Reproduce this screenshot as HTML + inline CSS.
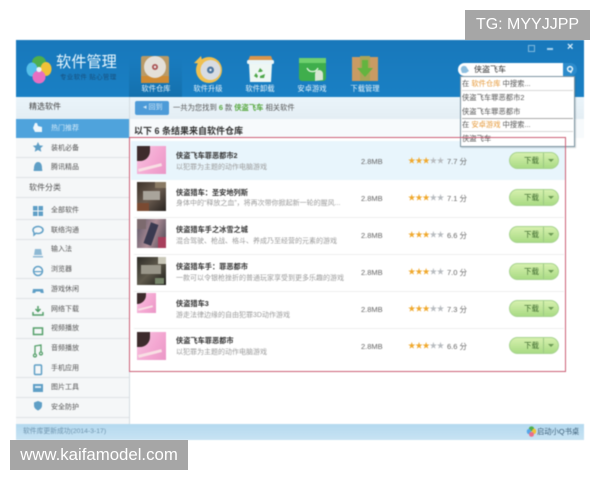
<!DOCTYPE html>
<html lang="zh"><head><meta charset="utf-8"><title>软件管理</title>
<style>
html,body{margin:0;padding:0;background:#fff;width:600px;height:480px;overflow:hidden}
body{position:relative;font-family:"Liberation Sans","Noto Sans CJK SC",sans-serif;color:#444}
div,span{position:absolute;white-space:nowrap}
span.i{position:static}
svg{position:absolute;overflow:visible}
#app{left:0;top:0;width:600px;height:480px;filter:blur(.4px)}
.tl{color:#e6f3fb;font-size:7.3px;line-height:10px;text-align:center;width:50px;top:84px}
.nav{left:16px;width:113px;height:20px;background:#f5f7f8;border-bottom:1px solid #dfe3e5;box-sizing:border-box}
.sl{left:51px;font-size:7px;line-height:10px;color:#555}
.rowline{left:134px;width:430px;height:1px;background:#eee}
.name{left:176px;font-size:7.2px;line-height:10px;font-weight:bold;color:#333}
.desc{left:176px;font-size:7px;line-height:10px;color:#9a9a9a}
.size{left:361px;font-size:7.5px;line-height:10px;color:#666}
.star{left:408px;font-size:7.5px;line-height:10px;letter-spacing:-.3px;color:#f0a92e}
.star b{font-weight:normal;color:#b8bcc0}
.sc{left:447px;font-size:7.5px;line-height:10px;color:#666}
.btn{left:509px;width:50px;height:17px;border-radius:9px;background:linear-gradient(#d6f0ae,#a9db84);border:1px solid #a8d490;box-sizing:border-box;color:#3e6b2e;font-size:7.5px;line-height:15px}
.btn i{position:absolute;left:33px;top:0;width:1px;height:15px;background:#9cc884}
.btn u{position:absolute;left:38px;top:6px;border:3px solid transparent;border-top:3px solid #6c9a55}
.th{left:137px;width:29px;height:29px;overflow:hidden}
.pink{background:linear-gradient(120deg,#f6c4e0,#f4a8d2 55%,#ea96c6)}
.hair{background:#3d2b2c;border-radius:0 0 10px 0;left:0;top:0}
.sash{background:#f8dfe4;transform:rotate(-14deg)}
.dark{background:linear-gradient(135deg,#3c3129,#6b5c50 50%,#27221f)}
.menu{left:462px;font-size:7.3px;line-height:10px;color:#555}
.or{position:static;color:#e69a3a}
.wm{background:#a6a6a6;color:#fff;font-family:"Liberation Sans",sans-serif}
</style></head><body>
<div id="app">
<div style="left:16px;top:40px;width:568px;height:400px;background:#fff"></div>
<!-- header -->
<div style="left:16px;top:40px;width:568px;height:57px;background:linear-gradient(#1878bb,#1a80c4)"></div>
<div style="left:129px;top:58px;width:53px;height:39px;background:linear-gradient(rgba(16,100,160,0),#1470ad)"></div>

<!-- logo -->
<svg style="left:26px;top:55px" width="26" height="29" viewBox="0 0 26 29">
<ellipse cx="13" cy="7.5" rx="7" ry="6.5" fill="#4fae4c"/>
<ellipse cx="20" cy="14" rx="5.5" ry="7" fill="#f0c238"/>
<ellipse cx="6" cy="14.5" rx="5.5" ry="7" fill="#56bfe8"/>
<ellipse cx="13" cy="22" rx="6.5" ry="6.5" fill="#e86fc2"/>
<circle cx="13" cy="14.5" r="2.6" fill="#e8f5fb"/>
</svg>
<div style="left:56px;top:54px;font-size:15.2px;line-height:18px;color:#e8f6fd">软件管理</div>
<div style="left:60px;top:74px;font-size:6.5px;line-height:8px;color:#174f7d;letter-spacing:.3px">专业软件 贴心管理</div>

<!-- toolbar icons -->
<svg style="left:140px;top:56px" width="30" height="28" viewBox="0 0 30 28">
<rect x="1" y="0" width="28" height="27" rx="2" fill="#b99a66"/>
<rect x="1" y="20" width="28" height="7" fill="#cf8b34"/>
<circle cx="15" cy="11" r="11" fill="#e4e0d8"/>
<circle cx="15" cy="11" r="3" fill="#a55"/><circle cx="15" cy="11" r="1.2" fill="#eee"/>
</svg>
<svg style="left:193px;top:56px" width="30" height="27" viewBox="0 0 30 27">
<circle cx="16" cy="14" r="13" fill="#efc050"/>
<circle cx="17.500" cy="14" r="10" fill="#d8dce2"/>
<circle cx="17.500" cy="14" r="3.500" fill="#4d77a0"/><circle cx="17.500" cy="14" r="1.200" fill="#e8eef3"/>
<path d="M1 7 L8 0 L10 8 Z" fill="#efc050"/>
</svg>
<svg style="left:246px;top:55px" width="29" height="28" viewBox="0 0 29 28">
<path d="M4 1h21l2 5H2z" fill="#d9954c"/>
<rect x="1" y="5" width="27" height="4" rx="1.5" fill="#e9f5f8"/>
<path d="M3 9h23l-1 18H4z" fill="#eef7f4"/>
<path d="M14 13l3 3-2 1h-3zM19 19l-1 4h-4v-2zM10 18l2 3-1 2-3-2z" fill="#4fa84a"/>
</svg>
<svg style="left:298px;top:56px" width="29" height="26" viewBox="0 0 29 26">
<rect x="1" y="2" width="27" height="23" rx="3" fill="#3fae4c"/>
<rect x="1" y="2" width="27" height="5" fill="#6fd06e"/>
<path d="M9 12a6 6 0 0 0 11 0" fill="none" stroke="#dff5dc" stroke-width="1.4"/>
<path d="M17 25v-7a4 4 0 0 1 8 0v6z" fill="#d9e6d4"/>
</svg>
<svg style="left:351px;top:56px" width="28" height="26" viewBox="0 0 28 26">
<path d="M1 1h26v24H1z" fill="#c99b63"/>
<path d="M9 0h10v25H9z" fill="#a9a458"/>
<path d="M11 4h6v8h5l-8 9-8-9h5z" fill="#63b43f"/>
</svg>
<div class="tl" style="left:131px">软件仓库</div>
<div class="tl" style="left:183px">软件升级</div>
<div class="tl" style="left:235px">软件卸载</div>
<div class="tl" style="left:287px">安卓游戏</div>
<div class="tl" style="left:340px">下载管理</div>

<!-- window controls -->
<div style="left:528px;top:45px;width:5px;height:5px;border:1px solid #7fb8dd"></div>
<div style="left:547px;top:48px;width:6px;height:1.5px;background:#a8d3ee"></div>
<div style="left:567px;top:41px;font-size:11px;line-height:12px;color:#d8eefa;font-weight:bold">×</div>

<!-- sub bar -->
<div style="left:16px;top:97px;width:568px;height:22px;background:linear-gradient(#eaf4fa,#e4eef4)"></div>
<div style="left:29px;top:102px;font-size:8px;line-height:10px;color:#444">精选软件</div>
<div style="left:135px;top:101px;width:34px;height:14px;border-radius:2px;background:#4d9bd8"></div>
<div style="left:143px;top:103px;font-size:7px;line-height:10px;color:#cfe6f6">◂ 回到</div>
<div style="left:173px;top:103px;font-size:7.3px;line-height:10px;color:#555">一共为您找到 <b class="i" style="color:#58a83f">6</b> 款 <b class="i" style="color:#58a83f">侠盗飞车</b> 相关软件</div>

<!-- sidebar -->
<div style="left:16px;top:119px;width:113px;height:305px;background:#f5f7f8"></div>
<div style="left:129px;top:97px;width:1px;height:327px;background:#d5dde2"></div>
<div style="left:16px;top:119px;width:113px;height:19px;background:#4fa3dc"></div>
<div class="nav" style="top:138px"></div><div class="nav" style="top:158px"></div><div class="nav" style="top:178px"></div>
<div class="nav" style="top:198px;height:22px"></div><div class="nav" style="top:220px"></div><div class="nav" style="top:240px"></div><div class="nav" style="top:259px"></div><div class="nav" style="top:279px"></div>
<div class="nav" style="top:299px"></div><div class="nav" style="top:319px"></div><div class="nav" style="top:339px"></div><div class="nav" style="top:358px"></div><div class="nav" style="top:378px"></div><div class="nav" style="top:398px"></div>

<div class="sl" style="top:124px;color:#d2e9f8">热门推荐</div>
<div class="sl" style="top:144px">装机必备</div>
<div class="sl" style="top:163px">腾讯精品</div>
<div style="left:29px;top:183px;font-size:8px;line-height:10px;color:#555">软件分类</div>
<div class="sl" style="top:206px">全部软件</div>
<div class="sl" style="top:226px">联络沟通</div>
<div class="sl" style="top:245px">输入法</div>
<div class="sl" style="top:265px">浏览器</div>
<div class="sl" style="top:285px">游戏休闲</div>
<div class="sl" style="top:305px">网络下载</div>
<div class="sl" style="top:324px">视频播放</div>
<div class="sl" style="top:344px">音频播放</div>
<div class="sl" style="top:364px">手机应用</div>
<div class="sl" style="top:383px">图片工具</div>
<div class="sl" style="top:403px">安全防护</div>

<!-- sidebar icons -->
<svg style="left:32px;top:122px" width="12" height="280" viewBox="0 0 12 280" fill="#5f9fc6">
<path d="M3 1l2 0 1 3 4 1 0 5H3L1 6z" fill="#eef7fc"/>
<path d="M6 20l1.6 3.4 3.6.4-2.7 2.4.8 3.6L6 28l-3.3 1.8.8-3.6L.8 23.8l3.6-.4z"/>
<path d="M6 40c3 0 4 3 4 6s1 2 0 3H2c-1-1 0-1 0-3s1-6 4-6z"/>
<path d="M1 84h4.500v4.500H1zM6.500 84H11v4.500H6.500zM1 89.500h4.500V94H1zM6.500 89.500H11V94H6.500z"/>
<path d="M1 108a5 3.500 0 1 1 3 3.200L2 113v-2.500A3.500 3.500 0 0 1 1 108z" fill="none" stroke="#5f9fc6" stroke-width="1.500"/>
<path d="M3 127h6l1 6H2zM1 134h10v1.500H1z" fill="#8eb9d4"/>
<circle cx="6" cy="149" r="4.500" fill="none" stroke="#5f9fc6" stroke-width="1.500"/><path d="M2 149h8v1.200H2z"/>
<path d="M1 167h10l.8 4H9l-1-1.500H4L3 171H.3z"/>
<path d="M6 184v5M3.500 187l2.500 2.500 2.500-2.500M1 190v3h10v-3" fill="none" stroke="#55a06a" stroke-width="1.500"/>
<rect x="1.500" y="206" width="9" height="6.500" fill="none" stroke="#55a06a" stroke-width="1.500"/>
<path d="M3 232v-8l6-1v7M3 232a1.500 1.500 0 1 1-.1 0M9 230a1.500 1.500 0 1 1-.1 0" fill="none" stroke="#55a06a" stroke-width="1.300"/>
<rect x="2.500" y="243" width="7" height="9.500" rx="1" fill="none" stroke="#5f9fc6" stroke-width="1.500"/>
<rect x="1" y="262" width="10" height="8" fill="#5f9fc6"/><rect x="3" y="264" width="6" height="2" fill="#dbeaf3"/>
<path d="M6 279l4 1.500v3c0 2.500-2 4-4 5-2-1-4-2.500-4-5v-3z"/>
</svg>

<!-- results header -->
<div style="left:130px;top:119px;width:454px;height:19px;background:#f7fafc"></div>
<div style="left:134px;top:126px;font-size:9px;line-height:11px;font-weight:bold;color:#333">以下 6 条结果来自软件仓库</div>

<!-- highlighted row -->
<div style="left:131px;top:141px;width:434px;height:39px;background:#e8f5fc"></div>
<div class="rowline" style="top:217px"></div><div class="rowline" style="top:254px"></div><div class="rowline" style="top:291px"></div><div class="rowline" style="top:328px"></div>

<!-- thumbs -->
<div class="th pink" style="top:146px;height:28px"><div class="hair" style="width:13px;height:15px"></div><div class="sash" style="left:1px;top:20px;width:24px;height:3px"></div></div>
<div class="th dark" style="top:182px"><div style="left:6px;top:9px;width:17px;height:9px;background:#a9a49b"></div><div style="left:0;top:21px;width:12px;height:8px;background:#7a4a32"></div><div style="left:18px;top:0;width:11px;height:6px;background:#8a7a64"></div></div>
<div class="th" style="top:219px;background:linear-gradient(110deg,#5a5566,#b08f98 50%,#4a4552)"><div style="left:10px;top:4px;width:8px;height:22px;background:#3a3a50;transform:rotate(20deg)"></div><div style="left:0;top:0;width:9px;height:10px;background:#7c6a6e"></div><div style="left:21px;top:18px;width:8px;height:11px;background:#a83f5c"></div></div>
<div class="th dark" style="top:257px;height:28px;background:linear-gradient(135deg,#2c2a25,#5f5a4c 50%,#1c1c18)"><div style="left:4px;top:8px;width:20px;height:9px;background:#9a978a"></div><div style="left:21px;top:0;width:8px;height:7px;background:#c9c7b8"></div><div style="left:18px;top:21px;width:9px;height:6px;background:#76856a"></div></div>
<div class="th pink" style="top:293px;width:19px;height:20px"><div class="hair" style="width:9px;height:11px"></div><div class="sash" style="left:1px;top:14px;width:15px;height:2px"></div></div>
<div class="th pink" style="top:332px;height:28px"><div class="hair" style="width:13px;height:15px"></div><div class="sash" style="left:1px;top:20px;width:24px;height:3px"></div></div>

<!-- rows -->
<div class="name" style="top:151px">侠盗飞车罪恶都市2</div>
<div class="desc" style="top:163px">以犯罪为主题的动作电脑游戏</div>
<div class="name" style="top:188px">侠盗猎车：圣安地列斯</div>
<div class="desc" style="top:199px">身体中的“释放之血”，将再次带你掀起新一轮的腥风...</div>
<div class="name" style="top:225px">侠盗猎车手之冰雪之城</div>
<div class="desc" style="top:237px">混合驾驶、枪战、格斗、养成乃至经营的元素的游戏</div>
<div class="name" style="top:262px">侠盗猎车手：罪恶都市</div>
<div class="desc" style="top:274px">一款可以令银枪挫折的普通玩家享受到更多乐趣的游戏</div>
<div class="name" style="top:299px">侠盗猎车3</div>
<div class="desc" style="top:311px">游走法律边缘的自由犯罪3D动作游戏</div>
<div class="name" style="top:336px">侠盗飞车罪恶都市</div>
<div class="desc" style="top:348px">以犯罪为主题的动作电脑游戏</div>

<div class="size" style="top:157px">2.8MB</div><div class="size" style="top:194px">2.8MB</div><div class="size" style="top:231px">2.8MB</div><div class="size" style="top:268px">2.8MB</div><div class="size" style="top:305px">2.8MB</div><div class="size" style="top:342px">2.8MB</div>

<div class="star" style="top:156px">★★★<b>★★</b></div><div class="sc" style="top:157px">7.7 分</div>
<div class="star" style="top:193px">★★★<b>★★</b></div><div class="sc" style="top:194px">7.1 分</div>
<div class="star" style="top:230px">★★★<b>★★</b></div><div class="sc" style="top:231px">6.6 分</div>
<div class="star" style="top:267px">★★★<b>★★</b></div><div class="sc" style="top:268px">7.0 分</div>
<div class="star" style="top:304px">★★★<b>★★</b></div><div class="sc" style="top:305px">7.3 分</div>
<div class="star" style="top:341px">★★★<b>★★</b></div><div class="sc" style="top:342px">6.6 分</div>

<div class="btn" style="top:152px"><span style="left:14px;top:0">下载</span><i></i><u></u></div>
<div class="btn" style="top:189px"><span style="left:14px;top:0">下载</span><i></i><u></u></div>
<div class="btn" style="top:226px"><span style="left:14px;top:0">下载</span><i></i><u></u></div>
<div class="btn" style="top:263px"><span style="left:14px;top:0">下载</span><i></i><u></u></div>
<div class="btn" style="top:300px"><span style="left:14px;top:0">下载</span><i></i><u></u></div>
<div class="btn" style="top:337px"><span style="left:14px;top:0">下载</span><i></i><u></u></div>

<!-- search -->
<div style="left:458px;top:63px;width:106px;height:13px;background:#fff;border-radius:7px 0 0 7px"></div>
<div style="left:563px;top:63px;width:14px;height:13px;border-radius:0 7px 7px 0;background:#2c8bcb"></div>
<svg style="left:566px;top:65px" width="9" height="9" viewBox="0 0 9 9"><circle cx="4" cy="4" r="2.400" fill="none" stroke="#e8f5fc" stroke-width="1.500"/><path d="M5.500 6L4.500 8" stroke="#e8f5fc" stroke-width="1.500"/></svg>
<svg style="left:460px;top:65px" width="10" height="9" viewBox="0 0 10 9"><path d="M1 5a3 3 0 0 1 6-2l2 3-3 2H2z" fill="#8ebfdf"/></svg>
<div style="left:474px;top:65px;font-size:8px;line-height:10px;color:#333">侠盗飞车</div>

<!-- dropdown -->
<div style="left:460px;top:76px;width:115px;height:71px;background:#fff;border:1px solid #7e95a2;box-sizing:border-box;box-shadow:1px 1px 1px rgba(70,90,100,.25)"></div>
<div style="left:462px;top:90px;width:111px;height:1px;background:#d8d8d8"></div>
<div style="left:462px;top:118px;width:111px;height:1px;background:#aaa"></div>
<div style="left:462px;top:131px;width:111px;height:1px;background:#d8d8d8"></div>
<div class="menu" style="top:79px">在 <span class="i or">软件仓库</span> 中搜索...</div>
<div class="menu" style="top:93px">侠盗飞车罪恶都市2</div>
<div class="menu" style="top:107px">侠盗飞车罪恶都市</div>
<div class="menu" style="top:120px">在 <span class="i or">安卓游戏</span> 中搜索...</div>
<div class="menu" style="top:134px">侠盗飞车</div>

<!-- red annotation box, drawn over the dropdown -->
<div style="left:129px;top:137px;width:437px;height:235px;border:1px solid #cc5f76;box-sizing:border-box"></div>

<!-- status bar -->
<div style="left:16px;top:424px;width:568px;height:16px;background:linear-gradient(#b4d9ef,#c8e3f3)"></div>
<div style="left:23px;top:427px;font-size:6.8px;line-height:10px;color:#6d93ad">软件库更新成功(2014-3-17)</div>
<svg style="left:526px;top:426px" width="11" height="11" viewBox="0 0 26 29"><ellipse cx="13" cy="7.500" rx="7" ry="6.500" fill="#4fae4c"/><ellipse cx="20" cy="14" rx="5.500" ry="7" fill="#f0c238"/><ellipse cx="6" cy="14.500" rx="5.500" ry="7" fill="#56a8e8"/><ellipse cx="13" cy="22" rx="6.500" ry="6.500" fill="#e86f8c"/></svg>
<div style="left:537px;top:427px;font-size:7.300px;line-height:10px;color:#3d5f78">启动小Q书桌</div>
</div>

<!-- watermarks -->
<div class="wm" style="left:465px;top:10px;width:125px;height:30px;font-size:16px;line-height:30px;text-align:center">TG: MYYJJPP</div>
<div class="wm" style="left:10px;top:440px;width:178px;height:30px;font-size:16.8px;line-height:30px;text-align:center">www.kaifamodel.com</div>
</body></html>
